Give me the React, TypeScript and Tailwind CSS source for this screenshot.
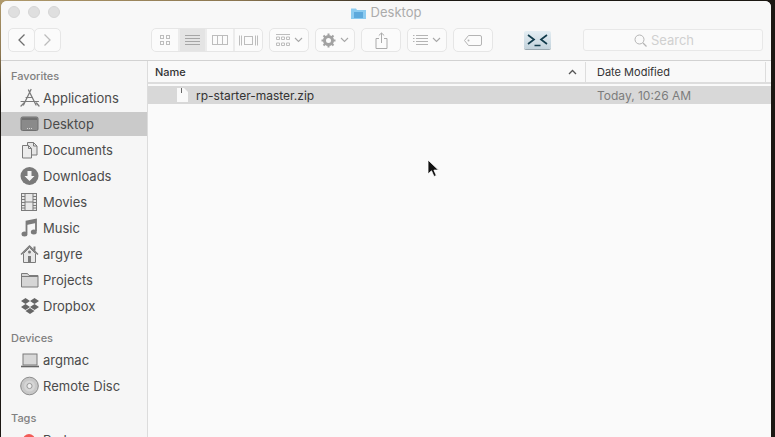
import React from "react";

const ic = "#7b7b7b";

function Svg({ w = 20, h = 20, children, className = "" }: { w?: number; h?: number; children: React.ReactNode; className?: string }) {
  return (
    <svg width={w} height={h} viewBox={`0 0 ${w} ${h}`} fill="none" className={`shrink-0 ${className}`}>
      {children}
    </svg>
  );
}

const L = "#bdbdbd";

const icons: Record<string, React.ReactNode> = {
  apps: (
    <Svg>
      <g stroke={ic} strokeWidth="1.3" strokeLinecap="round">
        <path d="M11 1.500 3.500 17M8.500 2 16 17" />
        <path d="M1 13.500 18.500 13.500" strokeWidth="1" />
        <path d="M6 9.500 12.500 9.500" strokeWidth="1" />
        <path d="M1 18 4 15M19 18 16.500 15" />
      </g>
    </Svg>
  ),
  desktop: (
    <Svg>
      <rect x="1" y="3" width="17" height="13.500" rx="1.500" fill="#8a8a8a" stroke="#6f6f6f" />
      <rect x="2" y="4" width="15" height="2" fill="#6f6f6f" />
      <path d="M7 14.500h.8M9 14.500h.8M11 14.500h.8" stroke="#e8e8e8" />
    </Svg>
  ),
  docs: (
    <Svg>
      <path d="M7.500 2.500h6l3.500 3.500v9h-9.500z" fill="#e6e6e6" stroke={ic} />
      <path d="M2.500 5.500h6l3 3v9.500h-9z" fill="#ececec" stroke={ic} />
      <path d="M8.500 5.500v3h3M13.500 2.500v3.500h3.500" stroke={ic} />
    </Svg>
  ),
  downloads: (
    <Svg>
      <circle cx="9.500" cy="10" r="9" fill="#7a7a7a" />
      <path d="M7.500 5h4v5h3l-5 5-5-5h3z" fill="#f6f6f6" />
    </Svg>
  ),
  movies: (
    <Svg>
      <rect x="1.500" y="1.500" width="15" height="17" fill="#e8e8e8" stroke={ic} />
      <path d="M5 1.500v17M13 1.500v17M5 10h8" stroke={ic} />
      <path d="M1.500 4.500h3.500M1.500 7.500h3.500M1.500 10.500h3.500M1.500 13.500h3.500M1.500 16h3.500M13 4.500h3.500M13 7.500h3.500M13 10.500h3.500M13 13.500h3.500M13 16h3.500" stroke={ic} />
    </Svg>
  ),
  music: (
    <Svg>
      <path d="M6.500 15V3.500L16 1.500V13" stroke={ic} strokeWidth="1.800" />
      <path d="M6.500 3.500 16 1.500V5L6.500 7z" fill={ic} />
      <ellipse cx="4.500" cy="16" rx="3" ry="2.500" fill={ic} />
      <ellipse cx="13.800" cy="14" rx="3" ry="2.500" fill={ic} />
    </Svg>
  ),
  home: (
    <Svg>
      <path d="M1 10.500 9.500 2l8.500 8.500" stroke={ic} strokeWidth="1.500" />
      <path d="M3.500 9.500 9.500 3.500l6 6V18.500h-12z" fill="#e8e8e8" stroke={ic} />
      <rect x="8" y="12" width="3" height="6.500" fill={ic} />
      <circle cx="9.500" cy="8" r="1.500" fill={ic} />
      <rect x="13.500" y="2.500" width="2" height="4" fill={ic} />
    </Svg>
  ),
  folder: (
    <Svg>
      <path d="M1.500 3.500h6l1.500 2h9v11.500h-16.500z" fill="#d6d6d6" stroke={ic} />
      <path d="M1.500 6.500h16.500" stroke={ic} />
    </Svg>
  ),
  dropbox: (
    <Svg>
      <path d="M5.500 2 10 5 5.500 8 1 5zM14.500 2 19 5l-4.500 3L10 5zM5.500 8 10 11l-4.500 3L1 11zM14.500 8 19 11l-4.500 3L10 11z" fill="#666" />
      <path d="M5.500 15l4.500-3 4.500 3-4.500 3z" fill="#666" />
    </Svg>
  ),
  laptop: (
    <Svg>
      <rect x="3" y="4" width="14" height="11" fill="#d8d8d8" stroke={ic} />
      <path d="M1 16.500h18" stroke="#666" strokeWidth="1.600" />
    </Svg>
  ),
  disc: (
    <Svg>
      <circle cx="9.500" cy="10" r="8.800" fill="#c8c8c8" stroke="#8c8c8c" />
      <circle cx="9.500" cy="10" r="5.500" fill="#d6d6d6" />
      <circle cx="9.500" cy="10" r="2.600" fill="#f0f0f0" stroke="#999" />
    </Svg>
  ),
};

function Item({ icon, label, active }: { icon: string; label: string; active?: boolean }) {
  return (
    <div className={`flex h-6 items-center gap-[3px] pl-[19px] mb-[2px] ${active ? "bg-[#cacaca]" : ""}`}>
      {icons[icon]}
      <span className="text-[13px] leading-none text-[#4b4b4b]">{label}</span>
    </div>
  );
}

function Head({ children, className = "" }: { children: React.ReactNode; className?: string }) {
  return <div className={`pl-[10px] text-[11px] font-medium leading-none text-[#808080] ${className}`}>{children}</div>;
}

function Btn({ children, className = "" }: { children: React.ReactNode; className?: string }) {
  return (
    <div className={`flex h-6 items-center justify-center rounded-[5px] border border-[#e6e6e6] bg-[#fbfbfb] ${className}`}>
      {children}
    </div>
  );
}

const Chev = () => (
  <Svg w={9} h={6} className="ml-[4px]">
    <path d="M1 1l3.500 3.500L8 1" stroke="#a8a8a8" strokeWidth="1.100" />
  </Svg>
);

export default function App() {
  return (
    <div className="relative h-[437px] w-[775px] overflow-hidden bg-[radial-gradient(ellipse_430px_100px_at_0_0,#b09a6c_0%,#8b7650_55%,#1c1813_100%)] pl-px pr-[4px] pt-px font-['Inter','Liberation_Sans',sans-serif]">
      <div className="flex h-[436px] flex-col overflow-hidden rounded-t-[6px] bg-[#f6f6f6]">
        {/* title + toolbar */}
        <div className="h-[60px] shrink-0 border-b border-[#d2d2d2] bg-[#f8f8f8]">
          <div className="relative flex h-[21px] items-center justify-center pt-[2px]">
            <div className="absolute left-[7px] top-[5px] flex gap-2">
              <span className="h-3 w-3 rounded-full border border-[#d5d5d5] bg-[#dfdfdf]" />
              <span className="h-3 w-3 rounded-full border border-[#d5d5d5] bg-[#dfdfdf]" />
              <span className="h-3 w-3 rounded-full border border-[#d5d5d5] bg-[#dfdfdf]" />
            </div>
            <Svg w={15} h={12} className="mr-[5px]">
              <path d="M0 1.500h5l1 1.500h9v9H0z" fill="#8ccbf0" />
              <rect x="3" y="5" width="9" height="6" fill="#5da9dc" />
            </Svg>
            <span className="text-[13px] leading-none text-[#ababab]">Desktop</span>
          </div>
          <div className="mt-[6px] flex items-center pl-[7px] pr-[7px]">
            <div className="flex">
              <Btn className="w-[27px]">
                <Svg w={9} h={14}><path d="M7.500 1.500 2 7l5.500 5.500" stroke="#6e6e6e" strokeWidth="1.300" /></Svg>
              </Btn>
              <Btn className="ml-[-1px] w-[27px]">
                <Svg w={9} h={14}><path d="M1.500 1.500 7 7l-5.500 5.500" stroke="#bcbcbc" strokeWidth="1.300" /></Svg>
              </Btn>
            </div>
            <div className="ml-[90px] flex h-6 w-28 overflow-hidden rounded-[5px] border border-[#e6e6e6] bg-[#fbfbfb]">
              <div className="flex w-[28px] items-center justify-center border-r-2 border-[#ececec]">
                <Svg w={10} h={10}>
                  <rect x=".5" y=".5" width="3" height="3" stroke={L} /><rect x="6.500" y=".5" width="3" height="3" stroke={L} />
                  <rect x=".5" y="6.500" width="3" height="3" stroke={L} /><rect x="6.500" y="6.500" width="3" height="3" stroke={L} />
                </Svg>
              </div>
              <div className="flex w-[27px] items-center justify-center border-r-2 border-[#ececec] bg-[#e4e4e4]">
                <Svg w={15} h={11}><path d="M0 .5h15M0 3.500h15M0 6.500h15M0 9.500h15" stroke="#a6a6a6" /></Svg>
              </div>
              <div className="flex w-[28px] items-center justify-center border-r-2 border-[#ececec]">
                <Svg w={16} h={10}><rect x=".5" y=".5" width="15" height="9" stroke={L} /><path d="M5.500 .5v9M10.500 .5v9" stroke={L} /></Svg>
              </div>
              <div className="flex flex-1 items-center justify-center">
                <Svg w={19} h={11}>
                  <rect x="5.500" y="1.500" width="8" height="8" stroke={L} />
                  <path d="M.5 .5v10M2.500 .5v10M16.500 .5v10M18.500 .5v10" stroke={L} />
                </Svg>
              </div>
            </div>
            <Btn className="ml-[6px] w-10">
              <Svg w={14} h={13}>
                <path d="M0 .5h14" stroke={L} />
                <path d="M.5 3h3v2.500h-3zM5.500 3h3v2.500h-3zM10.500 3h3v2.500h-3zM.5 9h3v2.500h-3zM5.500 9h3v2.500h-3zM10.500 9h3v2.500h-3z" stroke={L} />
              </Svg>
              <Chev />
            </Btn>
            <Btn className="ml-[6px] w-10">
              <Svg w={15} h={15}>
                <circle cx="7.500" cy="7.500" r="4" stroke="#a2a2a2" strokeWidth="3" />
                <path d="M7.500 .5v3M7.500 11.500v3M.5 7.500h3M11.500 7.500h3M2.500 2.500l2.200 2.200M10.300 10.300l2.200 2.200M12.500 2.500l-2.200 2.200M4.700 10.300l-2.200 2.200" stroke="#a2a2a2" strokeWidth="2" />
              </Svg>
              <Chev />
            </Btn>
            <Btn className="ml-[6px] w-10">
              <Svg w={13} h={17}>
                <path d="M4 6.500H1v10h11v-10H9" stroke="#ababab" />
                <path d="M6.500 11V1M3.800 3.500 6.500 1l2.700 2.500" stroke="#ababab" />
              </Svg>
            </Btn>
            <Btn className="ml-[6px] w-10">
              <Svg w={15} h={11}>
                <path d="M3 .5h12M3 3.500h12M3 6.500h12M3 9.500h12" stroke="#b4b4b4" />
                <path d="M0 .5h1.500M0 3.500h1.500M0 6.500h1.500" stroke="#b4b4b4" />
              </Svg>
              <Chev />
            </Btn>
            <Btn className="ml-[6px] w-10">
              <Svg w={18} h={11}>
                <path d="M4.500 .5H16a1.500 1.500 0 0 1 1.500 1.500v7a1.500 1.500 0 0 1-1.500 1.500H4.500L.5 5.500z" stroke="#b4b4b4" />
                <circle cx="4.500" cy="5.500" r="1" fill="#b4b4b4" />
              </Svg>
            </Btn>
            <div className="ml-[31px] flex h-[18px] w-[27px] items-center justify-center rounded-[2px] bg-[linear-gradient(to_bottom,#e4eef3,#c3d3dc)] shadow-[0_1px_0_#9aa8b0]">
              <Svg w={21} h={13}>
                <path d="M1 1 7 5.500 1 10" stroke="#123c4c" strokeWidth="1.700" />
                <path d="M20 1 14 5.500 20 10" stroke="#123c4c" strokeWidth="1.700" />
                <path d="M7.500 11.500h6" stroke="#123c4c" strokeWidth="1.600" />
              </Svg>
            </div>
            <div className="ml-[32px] flex h-[22px] w-[180px] items-center justify-center rounded-[3px] border border-[#e8e8e8] bg-[#fafafa] pr-[18px]">
              <Svg w={13} h={13} className="mr-[4px]">
                <circle cx="5.500" cy="5.500" r="4.500" stroke="#b4b4b4" />
                <path d="M9 9l3.500 3.500" stroke="#b4b4b4" strokeWidth="1.200" />
              </Svg>
              <span className="text-[13px] leading-none text-[#d0d0d0]">Search</span>
            </div>
          </div>
        </div>

        <div className="flex min-h-0 flex-1">
          {/* sidebar */}
          <div className="w-[147px] shrink-0 overflow-hidden border-r border-[#dcdcdc] bg-[#f6f6f6]">
            <Head className="mt-[10px] mb-[4px]">Favorites</Head>
            <Item icon="apps" label="Applications" />
            <Item icon="desktop" label="Desktop" active />
            <Item icon="docs" label="Documents" />
            <Item icon="downloads" label="Downloads" />
            <Item icon="movies" label="Movies" />
            <Item icon="music" label="Music" />
            <Item icon="home" label="argyre" />
            <Item icon="folder" label="Projects" />
            <Item icon="dropbox" label="Dropbox" />
            <Head className="mt-[15px] mb-[4px]">Devices</Head>
            <Item icon="laptop" label="argmac" />
            <Item icon="disc" label="Remote Disc" />
            <Head className="mt-[15px] mb-[4px]">Tags</Head>
            <div className="flex h-6 items-center gap-[8px] pl-[22px]">
              <span className="h-3 w-3 rounded-full bg-[#f25b56]" />
              <span className="text-[13px] leading-none text-[#4b4b4b]">Red</span>
            </div>
          </div>

          {/* list */}
          <div className="min-w-0 flex-1 bg-[#fafafa]">
            <div className="flex h-[23px] items-center border-b-2 border-[#dddddd] bg-[#f9f9f9]">
              <span className="w-[417px] pl-[7px] pt-px text-[11px] font-medium leading-none text-[#333]">Name</span>
              <Svg w={9} h={6} className="mr-[8px] ml-[3px]">
                <path d="M1 5l3.500-3.500L8 5" stroke="#555" strokeWidth="1.300" />
              </Svg>
              <span className="flex h-[20px] w-[181px] items-center border-x border-[#dddddd] pl-[11px] pt-px text-[11px] leading-none text-[#333]">Date Modified</span>
            </div>
            <div className="mt-[2px] flex h-[18px] items-center bg-[#d8d8d8]">
              <div className="flex w-[437px] items-center pl-[29px]">
                <Svg w={11} h={14} className="mr-[8px]">
                  <path d="M0 0h7l4 4v10H0z" fill="#f9f9f9" />
                  <path d="M4.500 0v5" stroke="#666" strokeWidth="1" />
                </Svg>
                <span className="pt-px text-[12px] leading-none text-[#333]">rp-starter-master.zip</span>
              </div>
              <span className="pl-[12px] pt-px text-[12px] leading-none text-[#7c7c7c]">Today, 10:26 AM</span>
            </div>
          </div>
        </div>
      </div>

      {/* mouse pointer */}
      <svg width="14" height="20" viewBox="0 0 14 20" className="absolute left-[426px] top-[159px]">
        <path d="M2 1v14l3.500-3.200L8 17.500l2.300-1-2.400-5.400H12.500z" fill="#111" stroke="#fff" strokeWidth=".8" />
      </svg>
    </div>
  );
}
